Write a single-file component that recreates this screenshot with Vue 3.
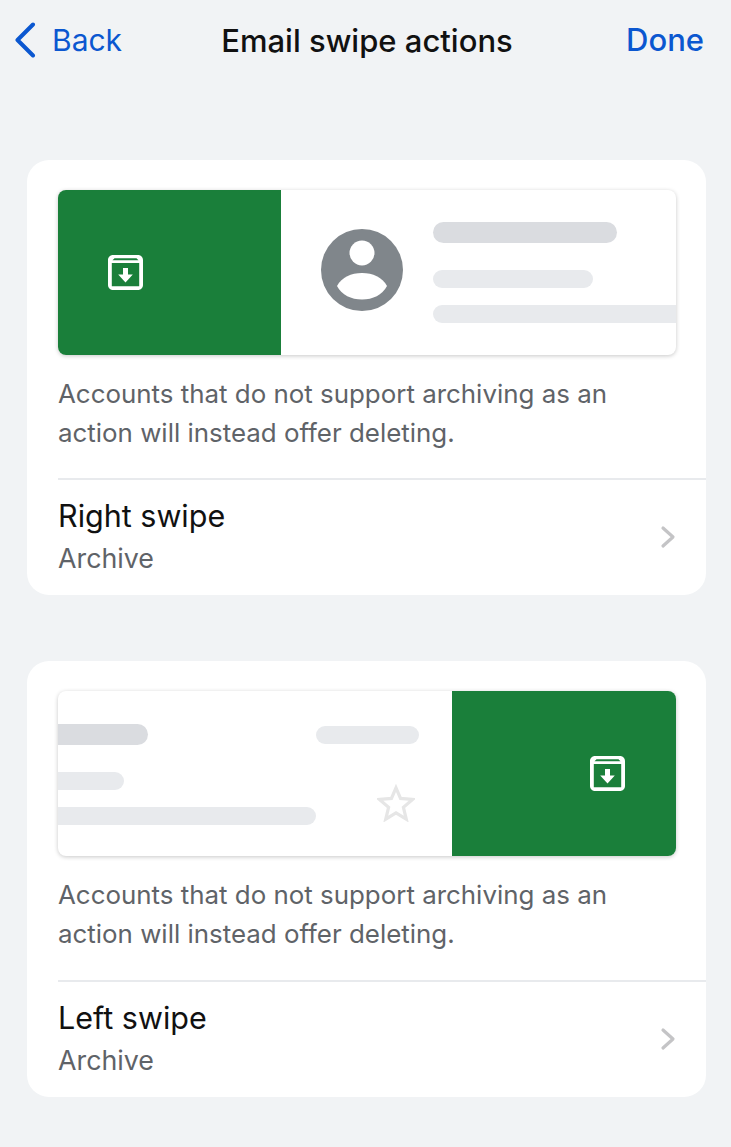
<template>
  <div class="screen">
    <!-- header -->
    <header class="nav">
      <div class="nav-back">
        <svg class="back-icon" width="24" height="36" viewBox="0 0 24 36" fill="none">
          <path d="M19 2.500L3.500 18L19 33.500" stroke="#0b57d0" stroke-width="4" stroke-linecap="round" stroke-linejoin="round" />
        </svg>
        <span>Back</span>
      </div>
      <div class="nav-title">Email swipe actions</div>
      <div class="nav-done">Done</div>
    </header>

    <section v-for="card in cards" :key="card.title" class="card">
      <!-- right swipe preview -->
      <div v-if="card.side === 'right'" class="preview preview-right">
        <div class="action">
          <svg class="archive" width="35" height="35" viewBox="0 0 35 35">
            <path fill="#fff" fill-rule="evenodd" d="M5 0H30C32.800 0 35 2.200 35 5V30C35 32.800 32.800 35 30 35H5C2.200 35 0 32.800 0 30V5C0 2.200 2.200 0 5 0ZM6.500 3.200L4.500 5.200H30.500L28.500 3.200ZM3.800 8V31.200H31.200V8Z" />
            <path fill="#fff" d="M15 13H20V19.500H24.800L17.500 27.500L10.200 19.500H15Z" />
          </svg>
        </div>
        <div class="mail">
          <svg class="avatar" width="82" height="82" viewBox="0 0 82 82">
            <circle cx="41" cy="41" r="41" fill="#80868b" />
            <circle cx="41" cy="24" r="12.500" fill="#fff" />
            <path d="M16 57C21 48 30 44 41 44C52 44 61 48 66 57C61 66 52 70.500 41 70.500C30 70.500 21 66 16 57Z" fill="#fff" />
          </svg>
          <div class="lines">
            <div class="bar bar-dark w-184 line-top"></div>
            <div class="bar w-160 line-mid"></div>
            <div class="bar bar-flush"></div>
          </div>
        </div>
      </div>

      <!-- left swipe preview -->
      <div v-else class="preview preview-left">
        <div class="mail-left">
          <div class="bar bar-dark bar-cut w-90 bar-first"></div>
          <div class="bar w-103 bar-date"></div>
          <div class="bar bar-cut w-66 bar-second"></div>
          <div class="bar bar-cut w-258 bar-third"></div>
          <svg class="star" width="38" height="38" viewBox="0 0 40 40" fill="none">
            <path d="M20 4L24.800 15.200L37.500 16.200L27.800 24.500L30.800 37L20 30.300L9.200 37L12.200 24.500L2.500 16.200L15.200 15.200Z" stroke="#e6e6e6" stroke-width="3.400" />
          </svg>
        </div>
        <div class="action">
          <svg class="archive" width="35" height="35" viewBox="0 0 35 35">
            <path fill="#fff" fill-rule="evenodd" d="M5 0H30C32.800 0 35 2.200 35 5V30C35 32.800 32.800 35 30 35H5C2.200 35 0 32.800 0 30V5C0 2.200 2.200 0 5 0ZM6.500 3.200L4.500 5.200H30.500L28.500 3.200ZM3.800 8V31.200H31.200V8Z" />
            <path fill="#fff" d="M15 13H20V19.500H24.800L17.500 27.500L10.200 19.500H15Z" />
          </svg>
        </div>
      </div>

      <p class="note">Accounts that do not support archiving as an action will instead offer deleting.</p>

      <div class="row">
        <div class="row-text">
          <div class="row-title">{{ card.title }}</div>
          <div class="row-value">{{ card.value }}</div>
        </div>
        <svg class="chevron" width="16" height="24" viewBox="0 0 16 24" fill="none">
          <path d="M3 3L13 12L3 21" stroke="#c4c4c6" stroke-width="3.200" stroke-linecap="round" stroke-linejoin="round" />
        </svg>
      </div>
    </section>
  </div>
</template>

<script setup>
const cards = [
  { side: "right", title: "Right swipe", value: "Archive" },
  { side: "left", title: "Left swipe", value: "Archive" },
];
</script>

<style>
html,
body {
  margin: 0;
  background: #f1f3f5;
}
</style>

<style scoped>
* {
  box-sizing: border-box;
}

.screen {
  width: 731px;
  height: 1147px;
  background: #f1f3f5;
  padding: 0 25px 0 27px;
  font-family: Inter, "Liberation Sans", sans-serif;
  overflow: hidden;
}

/* header */
.nav {
  height: 160px;
  margin: 0 -25px 0 -27px;
  padding: 22px 14px 0 14px;
  display: grid;
  grid-template-columns: 1fr auto 1fr;
  align-items: start;
  font-size: 30px;
  line-height: 36px;
}

.nav-back {
  display: flex;
  align-items: center;
  gap: 14px;
  color: #0b57d0;
}

.nav-title {
  color: #111;
  font-size: 31px;
  font-weight: 500;
  margin: 1px 0 0 3px;
}

.nav-done {
  color: #0b57d0;
  font-size: 31px;
  font-weight: 500;
  text-align: right;
  padding-right: 13px;
}

/* card */
.card {
  background: #fff;
  border-radius: 22px;
  padding: 30px 0 0 31px;
  height: 435px;
  margin-bottom: 66px;
}

.card:last-child {
  height: 436px;
}

.preview {
  display: flex;
  width: 618px;
  height: 165px;
  border-radius: 8px;
  overflow: hidden;
  box-shadow: 0 1px 4px rgba(0, 0, 0, 0.22);
}

.action {
  flex: none;
  background: #1a7f3a;
  display: flex;
  align-items: center;
}

.preview-right .action {
  width: 223px;
  padding-left: 50px;
}

.preview-left .action {
  width: 224px;
  padding-left: 138px;
}

.mail {
  flex: 1;
  display: flex;
  align-items: center;
  padding-left: 40px;
  gap: 30px;
  min-width: 0;
}

.avatar {
  flex: none;
  margin-bottom: 5px;
}

.lines {
  flex: 1;
  align-self: flex-start;
  padding-top: 32px;
}

.line-top {
  margin-bottom: 27px;
}

.line-mid {
  margin-bottom: 17px;
}

.bar {
  height: 18px;
  border-radius: 9px;
  background: #e8eaed;
}

.bar-dark {
  background: #dadce0;
  height: 21px;
  border-radius: 11px;
}

.bar-flush {
  border-radius: 9px 0 0 9px;
}

.bar-cut {
  border-radius: 0 11px 11px 0;
}

.w-184 { width: 184px; }
.w-160 { width: 160px; }
.w-90 { width: 90px; }
.w-103 { width: 103px; }
.w-66 { width: 66px; }
.w-258 { width: 258px; }

.mail-left {
  flex: 1;
  display: grid;
  grid-template-columns: 258px 1fr;
  grid-template-rows: 21px 18px 18px;
  padding-top: 33px;
  position: relative;
}

.bar-first {
  grid-column: 1;
  grid-row: 1;
}

.bar-date {
  grid-column: 1;
  grid-row: 1;
  align-self: center;
  justify-self: start;
  margin-left: 258px;
}

.bar-second {
  grid-column: 1;
  grid-row: 2;
  margin-top: 27px;
}

.bar-third {
  grid-column: 1;
  grid-row: 3;
  margin-top: 44px;
}

.star {
  position: absolute;
  left: 319px;
  top: 93px;
}

.note {
  margin: 19px 68px 0 0;
  font-size: 25.900px;
  line-height: 39px;
  color: #5f6368;
  height: 104px;
}

.card:last-child .note {
  height: 105px;
}

.row {
  border-top: 2px solid #e8eaed;
  display: flex;
  align-items: center;
  justify-content: space-between;
  padding: 0 30px 0 0;
  height: 116px;
}

.row-text {
  padding-bottom: 2px;
}

.row-title {
  font-size: 30.500px;
  line-height: 36px;
  color: #111;
}

.row-value {
  margin-top: 8px;
  font-size: 26.800px;
  line-height: 32px;
  color: #5f6368;
}

.chevron {
  flex: none;
}
</style>
